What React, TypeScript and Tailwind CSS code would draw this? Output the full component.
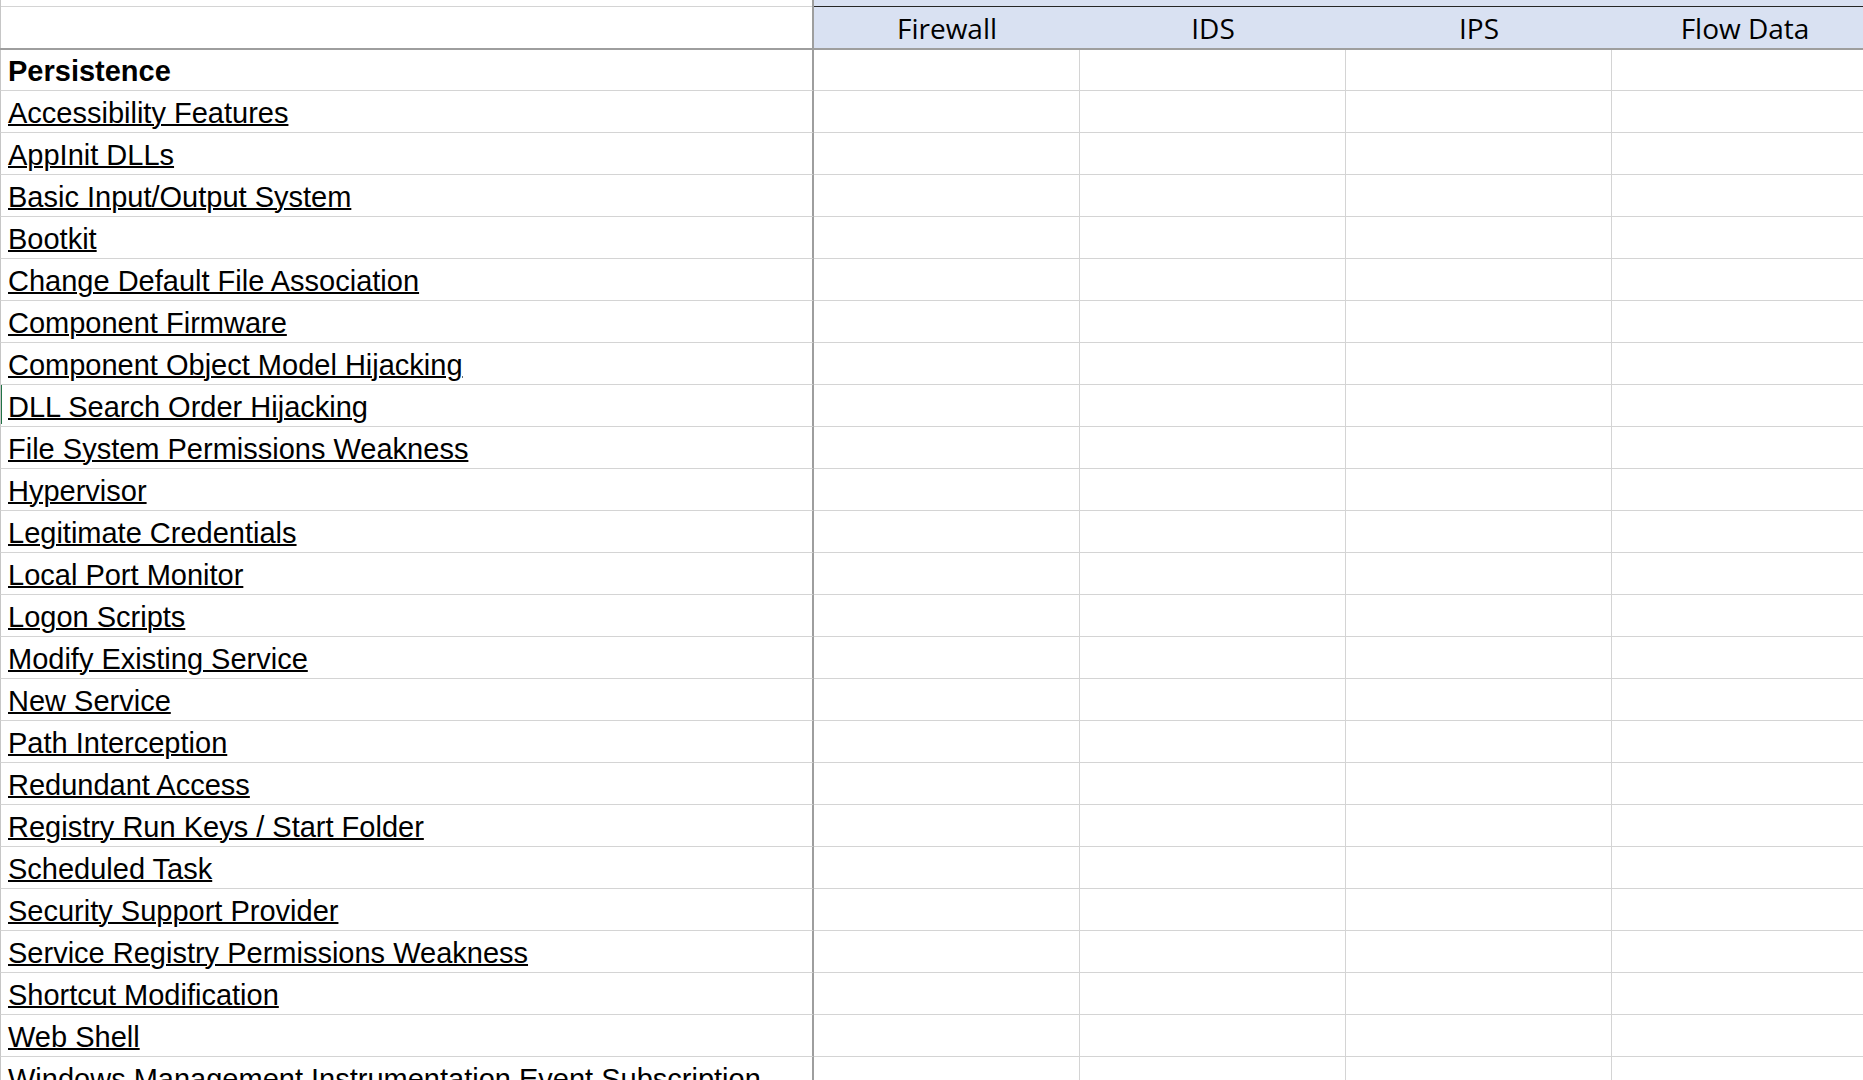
import React from "react";

const items = [
  "Accessibility Features",
  "AppInit DLLs",
  "Basic Input/Output System",
  "Bootkit",
  "Change Default File Association",
  "Component Firmware",
  "Component Object Model Hijacking",
  "DLL Search Order Hijacking",
  "File System Permissions Weakness",
  "Hypervisor",
  "Legitimate Credentials",
  "Local Port Monitor",
  "Logon Scripts",
  "Modify Existing Service",
  "New Service",
  "Path Interception",
  "Redundant Access",
  "Registry Run Keys / Start Folder",
  "Scheduled Task",
  "Security Support Provider",
  "Service Registry Permissions Weakness",
  "Shortcut Modification",
  "Web Shell",
  "Windows Management Instrumentation Event Subscription",
];

const headers = ["Firewall", "IDS", "IPS", "Flow Data"];

function DataCells() {
  return (
    <>
      {headers.map((h) => (
        <div
          key={h}
          className="w-[266px] shrink-0 h-full border-r border-b border-[#d4d4d4]"
        />
      ))}
    </>
  );
}

function Row({
  label,
  bold,
  first,
  selected,
}: {
  label: string;
  bold?: boolean;
  first?: boolean;
  selected?: boolean;
}) {
  return (
    <div className={first ? "flex h-[41px] shrink-0" : "flex h-[42px] shrink-0"}>
      <div className="relative w-[814px] shrink-0 h-full border-l border-l-[#c6c6c6] border-r-2 border-r-[#9e9e9e] border-b border-b-[#d4d4d4] flex items-end pl-[7px] pb-[2px] overflow-hidden">
        {selected && (
          <div className="absolute left-[-1px] top-[-2px] h-[41px] w-[2px] bg-[#217346]" />
        )}
        {bold ? (
          <span className="font-['Liberation_Sans',Arial,sans-serif] text-[29px] leading-[33px] font-bold text-black whitespace-nowrap">
            {label}
          </span>
        ) : (
          <span className="font-['Liberation_Sans',Arial,sans-serif] text-[29px] leading-[33px] text-black whitespace-nowrap underline decoration-[2px]">
            {label}
          </span>
        )}
      </div>
      <DataCells />
    </div>
  );
}

export default function App() {
  return (
    <div className="w-[1863px] h-[1080px] overflow-hidden bg-white flex flex-col">
      {/* Header */}
      <div className="flex h-[50px] shrink-0 border-b-2 border-[#9e9e9e]">
        <div className="w-[814px] shrink-0 h-full border-l border-l-[#c6c6c6] border-r-2 border-r-[#9e9e9e] bg-white">
          <div className="h-[7px] border-b border-[#d4d4d4]" />
        </div>
        <div className="flex-1 h-full bg-[#d9e1f2] flex flex-col overflow-hidden">
          <div className="h-[7px] shrink-0 border-b border-[#262626]" />
          <div className="flex flex-1 pt-[1px]">
            {headers.map((h) => (
              <div
                key={h}
                className="w-[266px] shrink-0 flex items-center justify-center font-['Open_Sans',sans-serif] text-[28px] leading-[38px] text-black whitespace-nowrap"
              >
                {h}
              </div>
            ))}
          </div>
        </div>
      </div>
      {/* Body */}
      <Row label="Persistence" bold first />
      {items.map((it) => (
        <Row key={it} label={it} selected={it === "DLL Search Order Hijacking"} />
      ))}
    </div>
  );
}
